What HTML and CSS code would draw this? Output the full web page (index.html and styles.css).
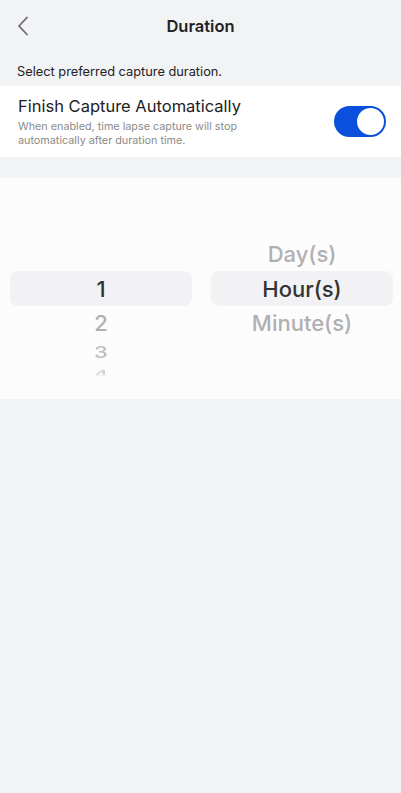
FILE: index.html
```html
<!DOCTYPE html>
<html lang="en">
<head>
<meta charset="utf-8">
<title>Duration</title>
<link rel="stylesheet" href="styles.css">
</head>
<body>
<div class="page">
  <header class="nav">
    <span class="back" aria-label="Back">
      <svg width="12" height="20" viewBox="0 0 12 20"><path d="M10 1.5 L2 10 L10 18.5" fill="none" stroke="#6b6b6e" stroke-width="1.8" stroke-linecap="round" stroke-linejoin="round"/></svg>
    </span>
    <h1 class="title">Duration</h1>
  </header>
  <p class="hint">Select preferred capture duration.</p>
  <section class="card">
    <div class="card-text">
      <div class="card-title">Finish Capture Automatically</div>
      <div class="card-desc">When enabled, time lapse capture will stop automatically after duration time.</div>
    </div>
    <div class="toggle"><span class="knob"></span></div>
  </section>
  <section class="picker">
    <div class="col">
      <div class="item spacer"></div>
      <div class="item selected">1</div>
      <div class="item">2</div>
      <div class="item far">3</div>
      <div class="item farther">4</div>
    </div>
    <div class="col">
      <div class="item">Day(s)</div>
      <div class="item selected">Hour(s)</div>
      <div class="item">Minute(s)</div>
    </div>
  </section>
</div>
</body>
</html>
```
FILE: styles.css
```css
* { box-sizing: border-box; }
html, body { margin: 0; padding: 0; }
body {
  background: #f2f3f5;
  font-family: Inter, "Liberation Sans", Arial, sans-serif;
  color: #222;
  width: 401px;
  height: 793px;
  overflow: hidden;
}
.page { display: flex; flex-direction: column; }
.nav {
  height: 52px;
  display: flex;
  align-items: center;
  justify-content: center;
  position: relative;
}
.back {
  position: absolute;
  left: 17px;
  top: 16px;
  width: 12px;
  height: 20px;
  display: flex;
}
.title {
  margin: 0;
  font-size: 16.5px;
  font-weight: 600;
  color: #222;
}
.hint {
  margin: 0;
  padding: 12px 17px 0;
  height: 34px;
  font-size: 12.8px;
  line-height: 16px;
  color: #222;
}
.card {
  background: #fff;
  height: 71px;
  display: flex;
  align-items: center;
  padding: 0 15px 0 18px;
}
.card-text { flex: 1; }
.card-title {
  font-size: 16.5px;
  line-height: 20px;
  color: #222;
}
.card-desc {
  margin-top: 4px;
  font-size: 10.8px;
  line-height: 14px;
  color: #8a8a8a;
  width: 250px;
}
.toggle {
  width: 52px;
  height: 31px;
  border-radius: 16px;
  background: #0a50dc;
  display: flex;
  align-items: center;
  justify-content: flex-end;
  padding: 0 2px;
}
.knob {
  width: 27px;
  height: 27px;
  border-radius: 50%;
  background: #fff;
}
.picker {
  margin-top: 21px;
  height: 221px;
  background: #fcfcfd;
  display: grid;
  grid-template-columns: 1fr 1fr;
  column-gap: 19px;
  padding: 59px 8px 0 10px;
  overflow: hidden;
}
.col { display: flex; flex-direction: column; }
.item {
  height: 34px;
  display: flex;
  align-items: center;
  justify-content: center;
  font-size: 22px;
  font-weight: 500;
  color: #b0b0b2;
}
.item.selected {
  background: #f2f2f4;
  border-radius: 8px;
  color: #333;
  height: 35px;
}
.item.far {
  height: 24px;
  transform: scaleY(0.72);
  color: #bdbdbf;
}
.item.farther {
  height: 20px;
  transform: scaleY(0.45);
  color: #cfcfd1;
  -webkit-mask-image: linear-gradient(to bottom, #000 45%, transparent 75%);
  mask-image: linear-gradient(to bottom, #000 45%, transparent 75%);
}
```
